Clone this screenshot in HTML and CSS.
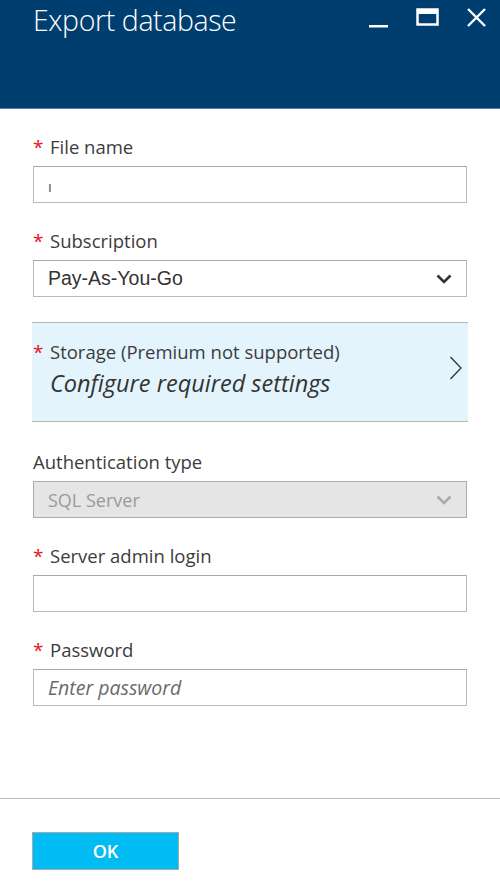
FILE: index.html
```html
<!DOCTYPE html>
<html>
<head>
<meta charset="utf-8">
<link rel="stylesheet" href="styles.css">
</head>
<body>
<div class="blade">
  <header class="head">
    <h1 class="title">Export database</h1>
    <div class="controls">
      <svg class="ctl" width="22" height="22" viewBox="0 0 22 22"><rect x="1" y="17" width="19" height="2.5" fill="#fff"/></svg>
      <svg class="ctl" width="24" height="22" viewBox="0 0 24 22"><rect x="1.5" y="1.5" width="20" height="15" fill="none" stroke="#fff" stroke-width="2.5"/><rect x="1" y="1" width="21" height="5" fill="#fff"/></svg>
      <svg class="ctl" width="22" height="22" viewBox="0 0 22 22"><path d="M2 1 L19 18 M19 1 L2 18" stroke="#fff" stroke-width="2.4"/></svg>
    </div>
  </header>
  <main class="form">
    <div class="field">
      <div class="label"><span class="req">*</span>File name</div>
      <div class="input"><span class="cursor">ı</span></div>
    </div>
    <div class="field">
      <div class="label"><span class="req">*</span>Subscription</div>
      <div class="input select"><span class="sel-text">Pay-As-You-Go</span>
        <svg width="16" height="10" viewBox="0 0 16 10"><path d="M1.5 1.5 L8 8 L14.5 1.5" fill="none" stroke="#333" stroke-width="2.6"/></svg>
      </div>
    </div>
    <div class="storage">
      <div class="storage-text">
        <div class="label"><span class="req">*</span>Storage (Premium not supported)</div>
        <div class="configure">Configure required settings</div>
      </div>
      <svg class="arrow" width="14" height="24" viewBox="0 0 14 24"><path d="M1.5 1 L12 12 L1.5 23" fill="none" stroke="#333" stroke-width="1.3"/></svg>
    </div>
    <div class="field">
      <div class="label plain">Authentication type</div>
      <div class="input select disabled"><span class="sel-text">SQL Server</span>
        <svg width="16" height="10" viewBox="0 0 16 10"><path d="M1.5 1.5 L8 8 L14.5 1.5" fill="none" stroke="#aaa" stroke-width="2.6"/></svg>
      </div>
    </div>
    <div class="field">
      <div class="label"><span class="req">*</span>Server admin login</div>
      <div class="input"></div>
    </div>
    <div class="field">
      <div class="label"><span class="req">*</span>Password</div>
      <div class="input"><span class="placeholder">Enter password</span></div>
    </div>
  </main>
  <footer class="foot">
    <button class="ok">OK</button>
  </footer>
</div>
</body>
</html>
```
FILE: styles.css
```css
* { box-sizing: border-box; }
html, body { margin: 0; padding: 0; background: #fff; }
body { font-family: "Open Sans", "Noto Sans", sans-serif; color: #3c3c3c; }
.blade { display: flex; flex-direction: column; height: 894px; }
.head {
  background: #003e6f;
  height: 109px;
  border-bottom: 1px solid #5a7fa0;
  display: flex;
  justify-content: space-between;
  align-items: flex-start;
  padding: 0 12px 0 33px;
}
.title {
  margin: 0;
  font-weight: 300;
  font-size: 28.5px;
  line-height: 40px;
  color: #fff;
  letter-spacing: -0.4px;
  padding-top: 0;
}
.controls { display: flex; gap: 26px; padding-top: 8px; }
.ctl { display: block; }
.form { flex: 1; padding: 26px 33px 0 33px; }
.field { margin-bottom: 26px; }
.label {
  font-size: 18.5px;
  line-height: 24px;
  height: 24px;
  margin-bottom: 7px;
  color: #3c3c3c;
  white-space: nowrap;
  letter-spacing: 0;
}
.req { color: #e8101c; display: inline-block; width: 17px; font-size: 19px; }
.input {
  height: 37px;
  border: 1px solid #b9b9b9;
  border-top-color: #a8a8a8;
  background: #fff;
  padding: 0 14px;
  display: flex;
  align-items: center;
}
.cursor { color: #555; font-size: 15px; margin-top: 2px; }
.select { justify-content: space-between; }
.sel-text { font-family: "Liberation Sans", Arial, sans-serif; font-size: 19.5px; color: #333; }
.disabled { background: #e5e5e5; border-color: #aaa; }
.disabled .sel-text { font-family: "Open Sans", sans-serif; font-size: 18px; color: #9a9a9a; }
.select svg { margin-right: 0; }
.placeholder { font-style: italic; font-size: 19.5px; color: #6a6a6a; }
.storage {
  margin: -1px -1px 28px -1px;
  border-top: 1px solid #b5b5b5;
  border-bottom: 1px solid #b5b5b5;
  background: #e3f4fc;
  height: 100px;
  padding: 17px 5px 0 1px;
  display: flex;
  justify-content: space-between;
  align-items: flex-start;
}
.storage .label { margin-bottom: 4px; }
.configure {
  font-style: italic;
  font-size: 23.5px;
  line-height: 30px;
  padding-left: 17px;
  color: #333;
  letter-spacing: 0;
}
.arrow { margin-top: 16px; }
.foot {
  border-top: 1px solid #bdbdbd;
  height: 96px;
  padding: 33px 0 0 32px;
}
.ok {
  width: 147px;
  height: 38px;
  background: #00bcf2;
  border: 1px solid #a9a9a9;
  color: #fff;
  font-family: "Open Sans", sans-serif;
  font-weight: 600;
  font-size: 18px;
  padding: 0;
}
```
